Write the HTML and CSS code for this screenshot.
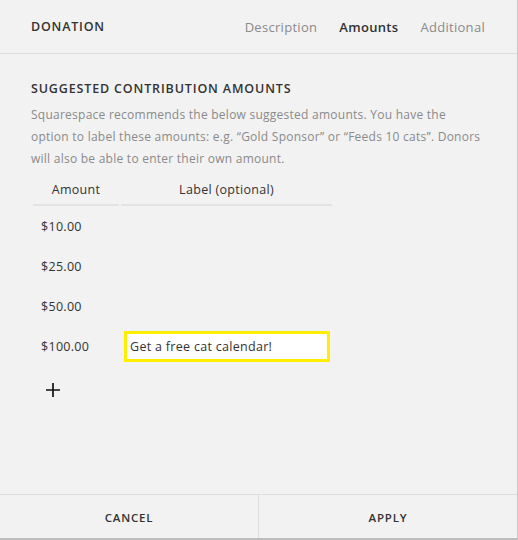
FILE: index.html
```html
<!DOCTYPE html>
<html>
<head>
<meta charset="utf-8">
<link rel="stylesheet" href="styles.css">
</head>
<body>
<div class="panel">
  <header class="header">
    <div class="title">DONATION</div>
    <nav class="tabs">
      <span class="tab">Description</span>
      <span class="tab active">Amounts</span>
      <span class="tab">Additional</span>
    </nav>
  </header>
  <main class="content">
    <h2 class="section-title">SUGGESTED CONTRIBUTION AMOUNTS</h2>
    <p class="desc">Squarespace recommends the below suggested amounts. You have the<br>option to label these amounts: e.g. “Gold Sponsor” or “Feeds 10 cats”. Donors<br>will also be able to enter their own amount.</p>
    <table class="amounts">
      <thead>
        <tr><th class="col-amount">Amount</th><th class="col-label">Label (optional)</th></tr>
      </thead>
      <tbody>
        <tr><td class="amt">$10.00</td><td></td></tr>
        <tr><td class="amt">$25.00</td><td></td></tr>
        <tr><td class="amt">$50.00</td><td></td></tr>
        <tr><td class="amt">$100.00</td><td><div class="label-input">Get a free cat calendar!</div></td></tr>
      </tbody>
    </table>
    <div class="add">
      <svg width="16" height="16" viewBox="0 0 16 16"><path d="M8 1v14M1 8h14" stroke="#111" stroke-width="1.7" fill="none"/></svg>
    </div>
  </main>
  <footer class="footer">
    <button class="btn">CANCEL</button>
    <button class="btn">APPLY</button>
  </footer>
</div>
</body>
</html>
```

FILE: styles.css
```css
* { box-sizing: border-box; }
html, body { margin: 0; padding: 0; }
body {
  width: 518px;
  height: 540px;
  background: #f2f2f2;
  font-family: "Open Sans", "Liberation Sans", sans-serif;
  color: #333;
}
.panel {
  width: 518px;
  height: 540px;
  display: flex;
  flex-direction: column;
  border-right: 1px solid #c8c8c8;
  border-bottom: 2px solid #bdbdbd;
  background: #f2f2f2;
}
.header {
  height: 54px;
  flex: none;
  display: flex;
  align-items: center;
  justify-content: space-between;
  padding: 0 32px 0 31px;
  border-bottom: 1px solid #dedede;
}
.title {
  font-size: 12.5px;
  font-weight: 600;
  letter-spacing: 0.8px;
  color: #333;
}
.tabs { display: flex; gap: 22px; }
.tab {
  font-size: 13px;
  color: #8a8a8a;
  letter-spacing: 0.3px;
}
.tab.active { color: #333; font-weight: 600; }
.content {
  flex: 1;
  padding: 27px 31px 0 31px;
}
.section-title {
  margin: 0;
  font-size: 12.5px;
  font-weight: 600;
  letter-spacing: 0.85px;
  color: #333;
  line-height: 16px;
}
.desc {
  margin: 7px 0 0 0;
  font-size: 12px;
  line-height: 22px;
  color: #8a8a8a;
  letter-spacing: 0.25px;
  white-space: nowrap;
}
.amounts {
  margin-top: 9px;
  border-collapse: separate;
  border-spacing: 2px 0;
}
.amounts th {
  font-size: 12.5px;
  font-weight: 400;
  color: #333;
  line-height: 17px;
  padding: 2px 0 6px 0;
  border-bottom: 2px solid #e3e3e3;
  letter-spacing: 0.3px;
}
.col-amount { width: 86px; }
.col-label { width: 211px; }
.amounts td {
  height: 40px;
  padding: 0;
  vertical-align: middle;
}
.amt {
  padding-left: 8px !important;
  font-size: 12.5px;
  color: #333;
  letter-spacing: 0.3px;
}
.label-input {
  margin-left: 3px;
  width: 206px;
  height: 31px;
  border: 3px solid #ffee00;
  background: #fff;
  font-size: 12.5px;
  line-height: 25px;
  padding-left: 3px;
  color: #333;
  letter-spacing: 0.3px;
}
.add {
  margin: 16px 0 0 14px;
  width: 16px;
  height: 16px;
}
.add svg { display: block; }
.footer {
  flex: none;
  height: 44px;
  display: flex;
  border-top: 1px solid #dedede;
}
.btn {
  flex: 1;
  background: transparent;
  border: none;
  font-family: inherit;
  font-size: 11.5px;
  font-weight: 600;
  letter-spacing: 0.8px;
  color: #333;
  padding: 1px 0 0 0;
}
.btn + .btn { border-left: 1px solid #dedede; }
```
